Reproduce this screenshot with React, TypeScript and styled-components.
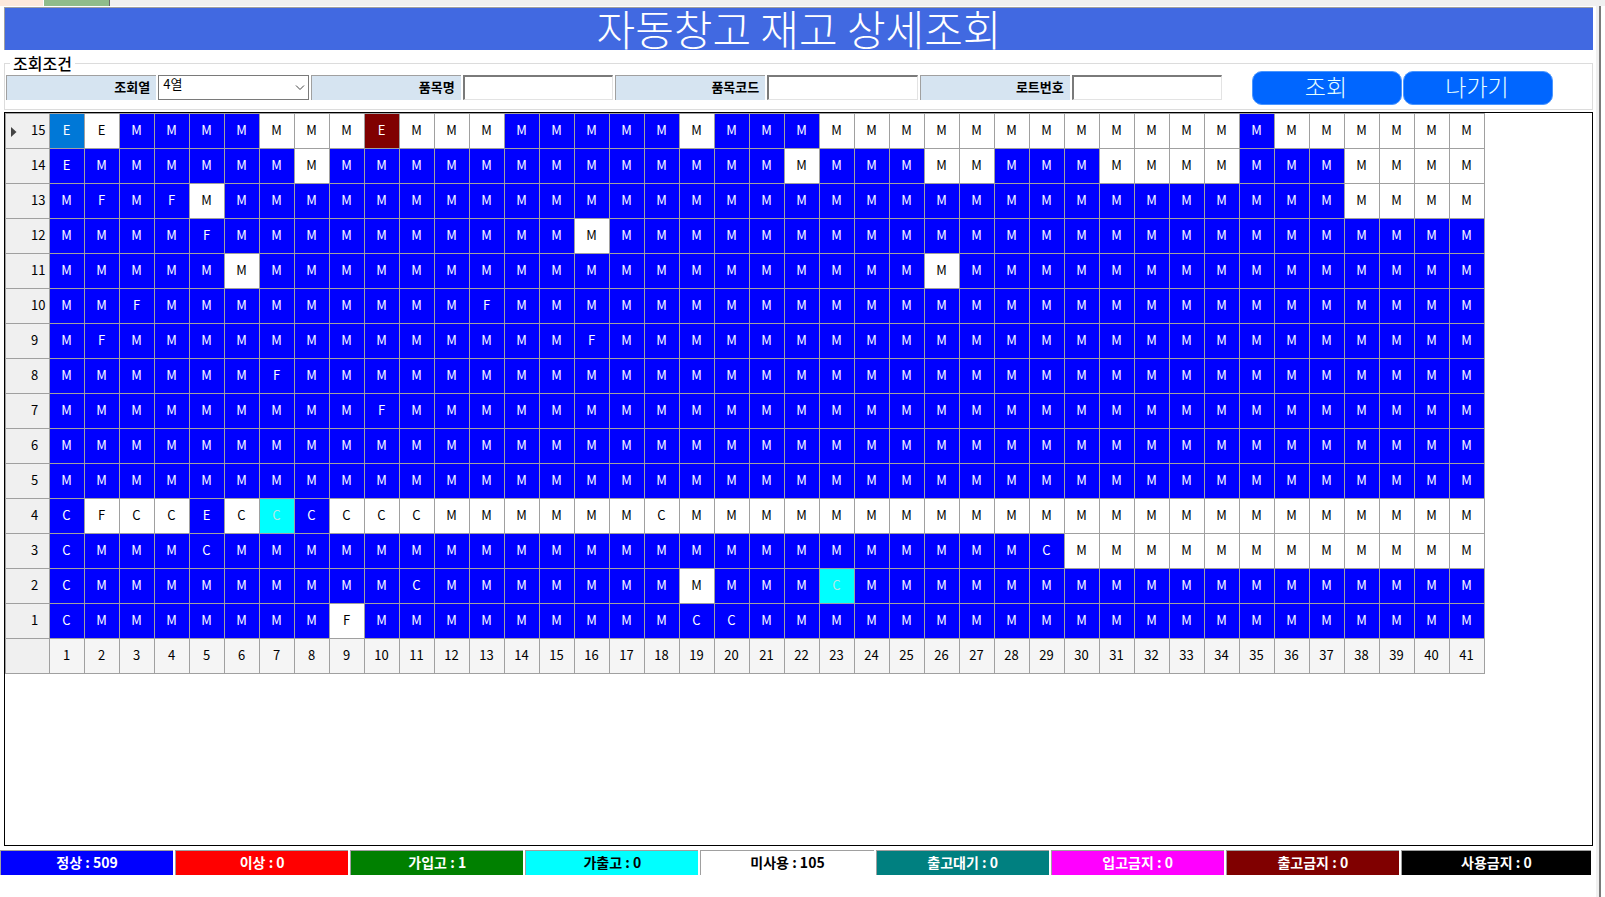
import React from "react";
import styled, { createGlobalStyle } from "styled-components";

const GlobalStyle = createGlobalStyle`
  * { box-sizing: border-box; }
  body {
    margin: 0;
    background: #fff;
    color: #000;
    font-family: "Noto Sans CJK KR", sans-serif;
    font-size: 13px;
  }
  button, input, select { font: inherit; color: inherit; }
`;

const Window = styled.div`
  min-height: 100vh;
  display: flex;
  flex-direction: column;
`;

const TabStrip = styled.div`
  display: flex;
  height: 6px;
  background: #f0f0f0;
`;

const Tab = styled.div<{ $width: number; $color: string; $active?: boolean }>`
  width: ${(p) => p.$width}px;
  background: ${(p) => p.$color};
  border-right: 1px solid ${(p) => (p.$active ? "#696969" : "#fff")};
`;

const Frame = styled.div`
  flex: 1;
  display: flex;
  flex-direction: column;
  margin-right: 4px;
  border-right: 2px solid #7a7a7a;
`;

const Pane = styled.div`
  flex: 1;
  display: flex;
  flex-direction: column;
  padding: 1px 3px 22px 0;
  border-right: 3px solid #f0f0f0;
`;

const Banner = styled.h1`
  display: flex;
  align-items: center;
  justify-content: center;
  height: 43px;
  margin: 0 0 0 4px;
  padding-bottom: 2px;
  border: solid #a0a0a0;
  border-width: 1px 0 0 1px;
  background: #4169e1;
  color: #fff;
  font-size: 42px;
  font-weight: 300;
  line-height: 40px;
`;

const SearchBox = styled.fieldset`
  min-width: 0;
  margin: 5px 0 2px 4px;
  padding: 0 39px 4px 1px;
  border: 1px solid #dcdcdc;
`;

const SearchTitle = styled.legend`
  margin-left: 4px;
  padding: 0 3px;
  font-size: 16px;
  font-weight: 500;
  line-height: 16px;
`;

const SearchRow = styled.div`
  display: flex;
  align-items: center;
`;

const Fields = styled.div`
  flex: 1;
  display: grid;
  grid-template-columns: repeat(4, 1fr);
  gap: 2px;
  padding-bottom: 2px;
`;

const Field = styled.div`
  display: grid;
  grid-template-columns: 1fr 1fr;
  gap: 2px;
  height: 25px;
`;

const FieldLabel = styled.label`
  padding-right: 6px;
  border: solid #a0a0a0;
  border-width: 1px 0 0 1px;
  background: #d6e4f1;
  font-size: 13px;
  font-weight: 700;
  line-height: 22px;
  text-align: right;
`;

const TextInput = styled.input`
  min-width: 0;
  width: 100%;
  padding: 0 4px;
  border: solid;
  border-width: 2px 1px 1px 2px;
  border-color: #7a7a7a #e3e3e3 #e3e3e3 #7a7a7a;
  border-radius: 0;
  background: #fff;
`;

const SelectWrap = styled.div`
  position: relative;
  display: grid;
`;

const Select = styled.select`
  appearance: none;
  width: 100%;
  padding: 0 20px 7px 4px;
  border: 1px solid #7a7a7a;
  border-radius: 0;
  background: #fff;
  font-size: 13px;
  line-height: 16px;
`;

const Chevron = styled.svg`
  position: absolute;
  top: 9px;
  right: 4px;
  pointer-events: none;
`;

const Actions = styled.div`
  display: flex;
  gap: 1px;
  margin-left: 30px;
`;

const ActionButton = styled.button`
  width: 150px;
  height: 34px;
  padding: 0 2px 4px 0;
  border: 1px solid #4a96ff;
  border-radius: 10px;
  background: #0066ff;
  color: #e6ffff;
  font-size: 23px;
  font-weight: 300;
  line-height: 28px;
`;

const GridPanel = styled.main`
  flex: 1;
  margin-left: 4px;
  border: 1px solid #000;
  overflow: hidden;
`;

const StockTable = styled.table`
  table-layout: fixed;
  width: 1480px;
  border-collapse: separate;
  border-spacing: 0;
  border: solid #a0a0a0;
  border-width: 1px 0 0 1px;
  line-height: 16px;
`;

const HeadCol = styled.col`
  width: 44px;
`;

const fills = {
  B: ["#0000ff", "#fff"],
  W: ["#fff", "#000"],
  S: ["#0078d7", "#fff"],
  R: ["#800000", "#fff"],
  C: ["#00ffff", "#b0e8e8"],
} as const;
type Fill = keyof typeof fills;

const Cell = styled.td<{ $fill: Fill }>`
  height: 35px;
  padding: 0 1px 3px 0;
  border: solid #a0a0a0;
  border-width: 0 1px 1px 0;
  background: ${(p) => fills[p.$fill][0]};
  color: ${(p) => fills[p.$fill][1]};
  text-align: center;
`;

const RowHead = styled.th`
  position: relative;
  height: 35px;
  padding: 0 0 3px 25px;
  border: solid #a0a0a0;
  border-width: 0 1px 1px 0;
  background: #f0f0f0;
  font-weight: 400;
  text-align: left;
`;

const CurrentMark = styled.svg`
  position: absolute;
  top: 13px;
  left: 5px;
`;

const ColHead = styled.th`
  height: 35px;
  padding: 0 1px 3px 0;
  border: solid #a0a0a0;
  border-width: 0 1px 1px 0;
  background: #f5f5f5;
  font-weight: 400;
  text-align: center;
`;

const Totals = styled.footer`
  display: grid;
  grid-template-columns: repeat(8, 173fr) 190fr;
  gap: 2px;
  margin-top: 4px;
  padding-right: 2px;
`;

const Total = styled.div<{ $bg: string; $dark?: boolean }>`
  height: 25px;
  border: solid #a0a0a0;
  border-width: 1px 0 0 1px;
  background: ${(p) => p.$bg};
  color: ${(p) => (p.$dark ? "#000" : "#fff")};
  font-size: 14px;
  font-weight: 700;
  line-height: 22px;
  text-align: center;
  white-space: pre;
`;

const COLUMNS = 41;

/* Each run is [fill, length]; rows without runs are all in normal use. */
type Row = { level: number; runs?: [Fill, number][]; marks?: Record<number, string> };

const rows: Row[] = [
  {
    level: 15,
    runs: [["S", 1], ["W", 1], ["B", 4], ["W", 3], ["R", 1], ["W", 3], ["B", 5], ["W", 1], ["B", 3], ["W", 12], ["B", 1], ["W", 6]],
    marks: { 1: "E", 2: "E", 10: "E" },
  },
  {
    level: 14,
    runs: [["B", 7], ["W", 1], ["B", 13], ["W", 1], ["B", 3], ["W", 2], ["B", 3], ["W", 4], ["B", 3], ["W", 4]],
    marks: { 1: "E" },
  },
  { level: 13, runs: [["B", 4], ["W", 1], ["B", 32], ["W", 4]], marks: { 2: "F", 4: "F" } },
  { level: 12, runs: [["B", 15], ["W", 1], ["B", 25]], marks: { 5: "F" } },
  { level: 11, runs: [["B", 5], ["W", 1], ["B", 19], ["W", 1], ["B", 15]] },
  { level: 10, marks: { 3: "F", 13: "F" } },
  { level: 9, marks: { 2: "F", 16: "F" } },
  { level: 8, marks: { 7: "F" } },
  { level: 7, marks: { 10: "F" } },
  { level: 6 },
  { level: 5 },
  {
    level: 4,
    runs: [["B", 1], ["W", 3], ["B", 1], ["W", 1], ["C", 1], ["B", 1], ["W", 33]],
    marks: { 1: "C", 2: "F", 3: "C", 4: "C", 5: "E", 6: "C", 7: "C", 8: "C", 9: "C", 10: "C", 11: "C", 18: "C" },
  },
  { level: 3, runs: [["B", 29], ["W", 12]], marks: { 1: "C", 5: "C", 29: "C" } },
  { level: 2, runs: [["B", 18], ["W", 1], ["B", 3], ["C", 1], ["B", 18]], marks: { 1: "C", 11: "C", 23: "C" } },
  { level: 1, runs: [["B", 8], ["W", 1], ["B", 32]], marks: { 1: "C", 9: "F", 19: "C", 20: "C" } },
];

const expand = (runs: [Fill, number][] = [["B", COLUMNS]]) =>
  runs.flatMap(([fill, count]) => Array<Fill>(count).fill(fill));

const totals = [
  { name: "정상", count: 509, bg: "#0000ff" },
  { name: "이상", count: 0, bg: "#ff0000" },
  { name: "가입고", count: 1, bg: "#008000" },
  { name: "가출고", count: 0, bg: "#00ffff", dark: true },
  { name: "미사용", count: 105, bg: "#ffffff", dark: true },
  { name: "출고대기", count: 0, bg: "#008080" },
  { name: "입고금지", count: 0, bg: "#ff00ff" },
  { name: "출고금지", count: 0, bg: "#800000" },
  { name: "사용금지", count: 0, bg: "#000000" },
];

const textFields = [
  { id: "item-name", label: "품목명" },
  { id: "item-code", label: "품목코드" },
  { id: "lot-no", label: "로트번호" },
];

export default function App() {
  const columnNumbers = Array.from({ length: COLUMNS }, (_, i) => i + 1);
  return (
    <Window>
      <GlobalStyle />
      <TabStrip>
        <Tab $width={44} $color="#fde9dc" />
        <Tab $width={66} $color="#8fbc8b" $active />
      </TabStrip>
      <Frame>
        <Pane>
          <Banner>자동창고 재고 상세조회</Banner>
          <SearchBox>
            <SearchTitle>조회조건</SearchTitle>
            <SearchRow>
              <Fields>
                <Field>
                  <FieldLabel htmlFor="line">조회열</FieldLabel>
                  <SelectWrap>
                    <Select id="line" defaultValue="4">
                      <option value="4">4열</option>
                    </Select>
                    <Chevron width="10" height="7" viewBox="0 0 10 7" fill="none" stroke="#444">
                      <path d="M1 1.5 5 5.5 9 1.5" />
                    </Chevron>
                  </SelectWrap>
                </Field>
                {textFields.map((f) => (
                  <Field key={f.id}>
                    <FieldLabel htmlFor={f.id}>{f.label}</FieldLabel>
                    <TextInput id={f.id} type="text" />
                  </Field>
                ))}
              </Fields>
              <Actions>
                <ActionButton type="button">조회</ActionButton>
                <ActionButton type="button">나가기</ActionButton>
              </Actions>
            </SearchRow>
          </SearchBox>
          <GridPanel>
            <StockTable>
              <colgroup>
                <HeadCol />
                <col span={COLUMNS} />
              </colgroup>
              <tbody>
                {rows.map((row, index) => (
                  <tr key={row.level}>
                    <RowHead scope="row">
                      {index === 0 && (
                        <CurrentMark width="6" height="10" viewBox="0 0 6 10" fill="#444">
                          <path d="M0 0 5.5 5 0 10Z" />
                        </CurrentMark>
                      )}
                      {row.level}
                    </RowHead>
                    {expand(row.runs).map((fill, i) => (
                      <Cell key={i} $fill={fill}>
                        {row.marks?.[i + 1] ?? "M"}
                      </Cell>
                    ))}
                  </tr>
                ))}
              </tbody>
              <tfoot>
                <tr>
                  <RowHead as="td" />
                  {columnNumbers.map((n) => (
                    <ColHead key={n} scope="col">
                      {n}
                    </ColHead>
                  ))}
                </tr>
              </tfoot>
            </StockTable>
          </GridPanel>
          <Totals>
            {totals.map((t) => (
              <Total key={t.name} $bg={t.bg} $dark={t.dark}>
                {`${t.name} : ${t.count}`}
              </Total>
            ))}
          </Totals>
        </Pane>
      </Frame>
    </Window>
  );
}
